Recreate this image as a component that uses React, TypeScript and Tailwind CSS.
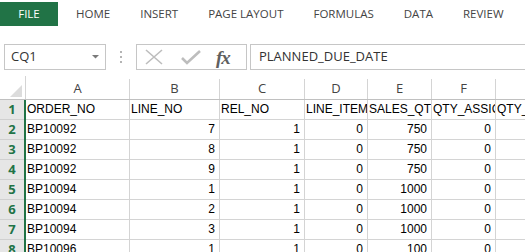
import React from "react";

const cols = [
  { key: "A", w: 104 },
  { key: "B", w: 90 },
  { key: "C", w: 85 },
  { key: "D", w: 63 },
  { key: "E", w: 64 },
  { key: "F", w: 64 },
  { key: "G", w: 80 },
];

const rows: (string | number)[][] = [
  ["ORDER_NO", "LINE_NO", "REL_NO", "LINE_ITEM_NO", "SALES_QTY", "QTY_ASSIGNED", "QTY_SHIPPED"],
  ["BP10092", 7, 1, 0, 750, 0, ""],
  ["BP10092", 8, 1, 0, 750, 0, ""],
  ["BP10092", 9, 1, 0, 750, 0, ""],
  ["BP10094", 1, 1, 0, 1000, 0, ""],
  ["BP10094", 2, 1, 0, 1000, 0, ""],
  ["BP10094", 3, 1, 0, 1000, 0, ""],
  ["BP10096", 1, 1, 0, 100, 0, ""],
];

const tabs = ["HOME", "INSERT", "PAGE LAYOUT", "FORMULAS", "DATA", "REVIEW"];

export default function App() {
  return (
    <div className="w-[525px] h-[252px] overflow-hidden bg-white flex flex-col">
      {/* Ribbon tabs */}
      <div className="h-[44px] shrink-0 flex items-start pt-[2px] font-['Open_Sans',sans-serif] text-[11.5px] text-[#444]">
        <div className="w-[58px] h-[24px] bg-[#217346] text-white flex items-center justify-center">FILE</div>
        <div className="w-[3px]" />
        {tabs.map((t) => (
          <div key={t} className="h-[24px] px-[15px] flex items-center">
            {t}
          </div>
        ))}
      </div>
      {/* Formula bar */}
      <div className="h-[26px] shrink-0 flex items-stretch font-['Open_Sans',sans-serif]">
        <div className="ml-[4px] w-[102px] border border-[#c6c6c6] flex items-center justify-between pl-[6px] pr-[5px] text-[13px] text-[#333]">
          <span>CQ1</span>
          <svg width="8" height="4" viewBox="0 0 8 4">
            <path d="M0 0 L7 0 L3.5 3.5 Z" fill="#7a7a7a" />
          </svg>
        </div>
        <div className="w-[30px] flex flex-col items-center justify-center gap-[3px]">
          <div className="w-[2px] h-[2px] bg-[#b4b4b4]" />
          <div className="w-[2px] h-[2px] bg-[#b4b4b4]" />
          <div className="w-[2px] h-[2px] bg-[#b4b4b4]" />
        </div>
        <div className="w-[111px] border border-[#c6c6c6] flex items-center">
          <svg className="ml-[8px]" width="18" height="16" viewBox="0 0 18 16">
            <path d="M1 1 L17 15 M17 1 L1 15" stroke="#bdbdbd" strokeWidth="1.6" />
          </svg>
          <svg className="ml-[18px]" width="20" height="16" viewBox="0 0 20 16">
            <path d="M1 9 L6 14 L19 2" stroke="#bdbdbd" strokeWidth="2.6" fill="none" />
          </svg>
          <span className="ml-[15px] font-['Liberation_Serif',serif] italic font-bold text-[19px] text-[#606060] leading-none tracking-[-1px]">
            fx
          </span>
        </div>
        <div className="ml-[3px] flex-1 border-y border-l border-[#c6c6c6] flex items-center pl-[8px] text-[13px] text-[#333]">
          PLANNED_DUE_DATE
        </div>
      </div>
      {/* Grid */}
      <div className="mt-[6px] shrink-0 flex flex-col">
        <div className="h-[24px] shrink-0 flex border-b border-[#c0c0c0] font-['Open_Sans',sans-serif] text-[13px] text-[#444]">
          <div className="w-[26px] shrink-0 relative border-r border-[#d4d4d4]">
            <svg className="absolute right-[3px] bottom-[2px]" width="12" height="12" viewBox="0 0 12 12">
              <path d="M12 0 L12 12 L0 12 Z" fill="#dcdcdc" />
            </svg>
          </div>
          {cols.map((c) => (
            <div
              key={c.key}
              style={{ width: c.w }}
              className="shrink-0 border-r border-[#d4d4d4] flex items-center justify-center mt-[3px]"
            >
              {c.key !== "G" ? c.key : ""}
            </div>
          ))}
        </div>
        {rows.map((r, i) => (
          <div key={i} className="h-[20px] shrink-0 flex font-['Liberation_Sans',sans-serif] text-[12px] text-black">
            <div className="w-[24px] shrink-0 bg-[#e6e6e6] border-b border-[#d0d0d0] flex items-center justify-center font-['Open_Sans',sans-serif] font-bold text-[13px] text-[#217346]">
              {i + 1}
            </div>
            <div className="w-[2px] shrink-0 bg-[#217346]" />
            {cols.map((c, j) => {
              const v = r[j];
              const num = typeof v === "number";
              return (
                <div
                  key={c.key}
                  style={{ width: c.w }}
                  className={
                    "shrink-0 border-r border-b border-[#d4d4d4] overflow-hidden whitespace-nowrap flex items-end pb-[1px] " +
                    (num ? "justify-end pr-[4px]" : "justify-start pl-[1px]")
                  }
                >
                  {v}
                </div>
              );
            })}
          </div>
        ))}
      </div>
    </div>
  );
}
